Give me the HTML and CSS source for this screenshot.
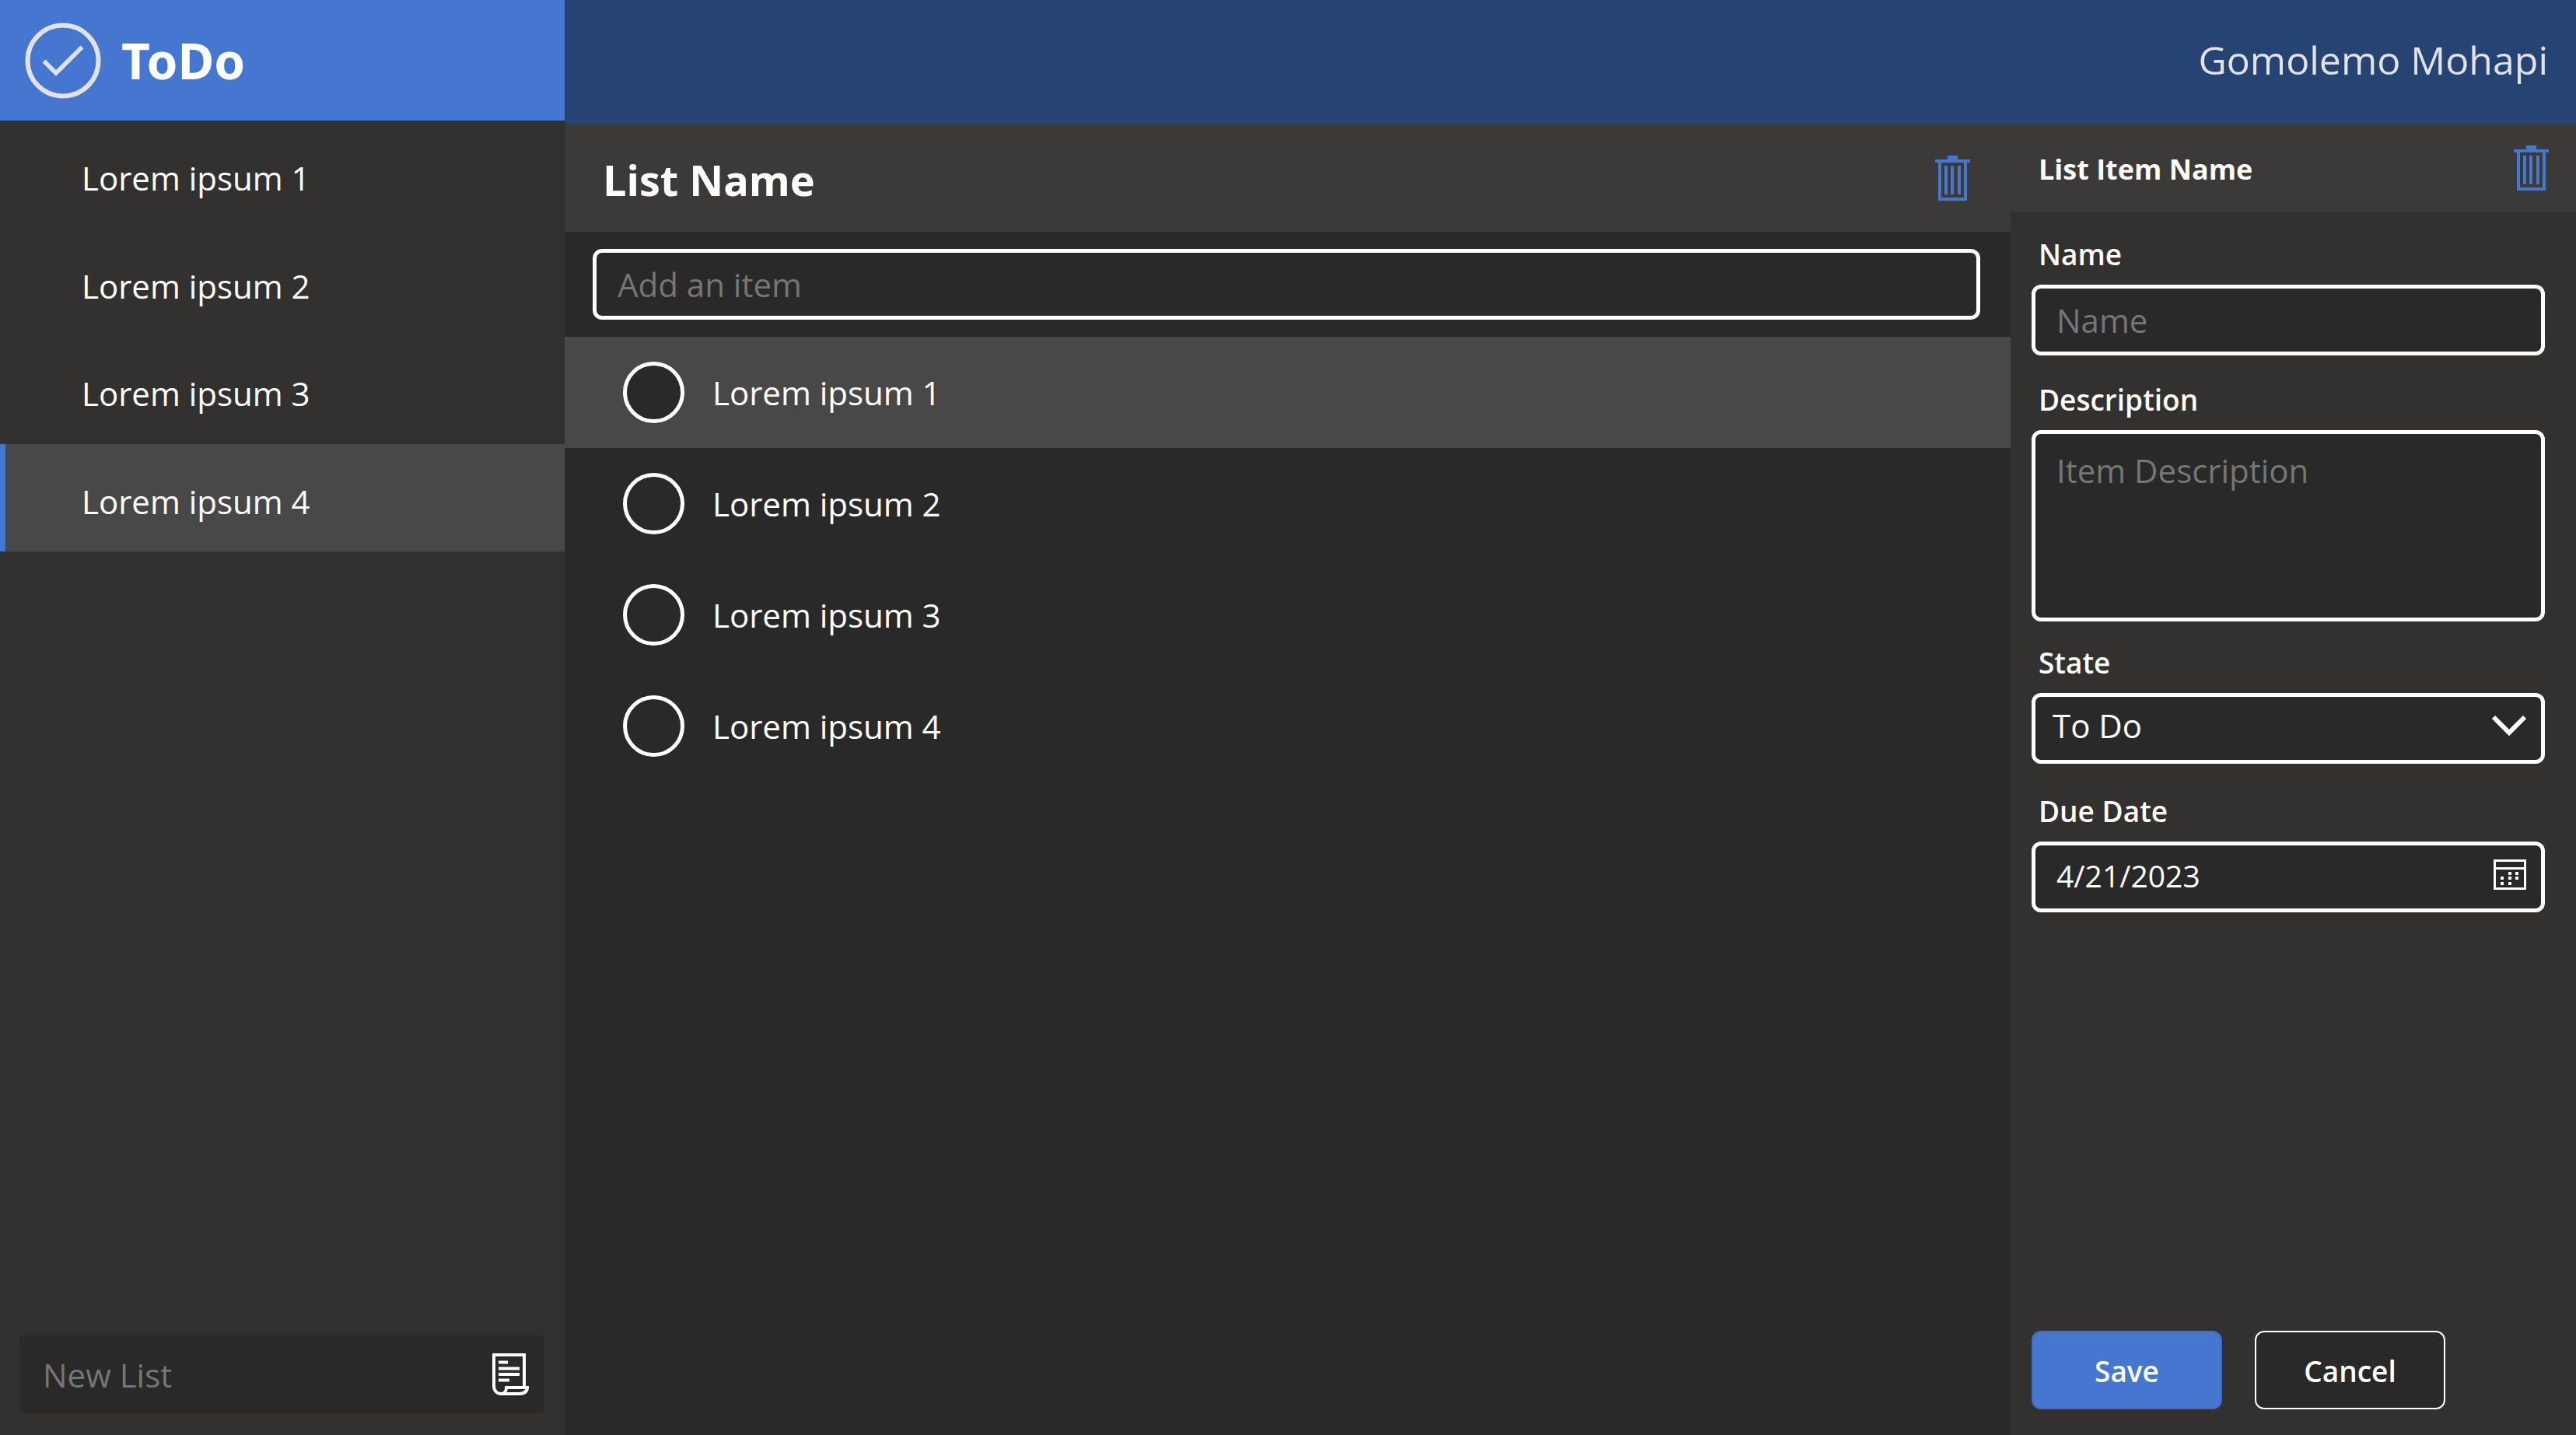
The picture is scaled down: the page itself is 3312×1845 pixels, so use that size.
FILE: index.html
```html
<!DOCTYPE html>
<html lang="en">
<head>
  <meta charset="utf-8">
  <meta name="viewport" content="width=device-width, initial-scale=1">
  <title>ToDo</title>
  <link rel="stylesheet" href="styles.css">
</head>
<body>
  <div class="app">
    <aside class="sidebar">
      <div class="brand">
        <svg class="brand-icon" viewBox="0 0 98 98" aria-hidden="true">
          <circle cx="49" cy="49" r="45.5" fill="none" stroke="currentColor" stroke-width="6"/>
          <path d="M24.500 49.500 40 65 73.500 31.500" fill="none" stroke="currentColor" stroke-width="5.500"/>
        </svg>
        <span class="brand-name">ToDo</span>
      </div>
      <nav class="lists">
        <a class="list-link" href="#list-1">Lorem ipsum 1</a>
        <a class="list-link" href="#list-2">Lorem ipsum 2</a>
        <a class="list-link" href="#list-3">Lorem ipsum 3</a>
        <a class="list-link is-active" href="#list-4" aria-current="page">Lorem ipsum 4</a>
      </nav>
      <form class="new-list">
        <input class="new-list-input" type="text" placeholder="New List" aria-label="New List">
        <button class="icon-button" type="button" aria-label="Create list">
          <svg class="icon-scroll" viewBox="0 0 47 54" fill="none" stroke="currentColor" stroke-width="4" aria-hidden="true">
            <path d="M41 43V2H2V42C2 48 6 52 11 52H34C40 52 44.500 50 45 44H18C18 49 15 52 11 52"/>
            <path d="M8 11.500H20M8 19.500H35M8 27H35M8 34.500H22"/>
          </svg>
        </button>
      </form>
    </aside>

    <header class="topbar">
      <span class="user-name">Gomolemo Mohapi</span>
    </header>

    <main class="items">
      <div class="items-header">
        <h1 class="items-title">List Name</h1>
        <button class="icon-button" type="button" aria-label="Delete list">
          <svg class="icon-trash" viewBox="0 0 45 58" aria-hidden="true">
            <path fill="currentColor" fill-rule="evenodd" d="M16 0H29V5H45V9H41V58H4V9H0V5H16ZM8 9V54H37V9ZM12 13H16V50H12ZM20 13H24V50H20ZM29 13H33V50H29Z"/>
          </svg>
        </button>
      </div>
      <div class="add-item">
        <input class="text-field" type="text" placeholder="Add an item" aria-label="Add an item">
      </div>
      <ul class="item-list">
        <li><label class="item is-active"><input class="item-check" type="checkbox">Lorem ipsum 1</label></li>
        <li><label class="item"><input class="item-check" type="checkbox">Lorem ipsum 2</label></li>
        <li><label class="item"><input class="item-check" type="checkbox">Lorem ipsum 3</label></li>
        <li><label class="item"><input class="item-check" type="checkbox">Lorem ipsum 4</label></li>
      </ul>
    </main>

    <section class="details">
      <div class="details-header">
        <h2 class="details-title">List Item Name</h2>
        <button class="icon-button" type="button" aria-label="Delete item">
          <svg class="icon-trash" viewBox="0 0 45 58" aria-hidden="true">
            <path fill="currentColor" fill-rule="evenodd" d="M16 0H29V5H45V9H41V58H4V9H0V5H16ZM8 9V54H37V9ZM12 13H16V50H12ZM20 13H24V50H20ZM29 13H33V50H29Z"/>
          </svg>
        </button>
      </div>
      <form class="details-form">
        <div class="field">
          <label class="field-label" for="item-name">Name</label>
          <input class="text-field" id="item-name" type="text" placeholder="Name">
        </div>
        <div class="field field-description">
          <label class="field-label" for="item-description">Description</label>
          <textarea class="text-field text-area" id="item-description" placeholder="Item Description"></textarea>
        </div>
        <div class="field">
          <label class="field-label" for="item-state">State</label>
          <div class="field-control">
            <select class="text-field select-field" id="item-state">
              <option>To Do</option>
              <option>In Progress</option>
              <option>Done</option>
            </select>
            <svg class="field-icon icon-chevron" viewBox="0 0 44 26" aria-hidden="true">
              <path d="M2 2 22 22 42 2" fill="none" stroke="currentColor" stroke-width="6"/>
            </svg>
          </div>
        </div>
        <div class="field field-date">
          <label class="field-label" for="item-due">Due Date</label>
          <div class="field-control">
            <input class="text-field date-field" id="item-due" type="text" value="4/21/2023">
            <svg class="field-icon icon-calendar" viewBox="0 0 42 39" aria-hidden="true">
              <path d="M1.500 1.500H40.500V37.500H1.500ZM1.500 11.500H40.500" fill="none" stroke="currentColor" stroke-width="3"/>
              <path d="M19 16h4v4h-4zM28 16h4v4h-4zM9 22h4v4h-4zM19 22h4v4h-4zM28 22h4v4h-4zM9 29h4v4h-4zM19 29h4v4h-4z" fill="currentColor"/>
            </svg>
          </div>
        </div>
        <div class="actions">
          <button class="button button-primary" type="button">Save</button>
          <button class="button" type="button">Cancel</button>
        </div>
      </form>
    </section>
  </div>
</body>
</html>
```
FILE: styles.css
```css
:root {
  --blue: #4577d0;
  --navy: #254474;
  --panel: #32312f;
  --panel-header: #3b3a38;
  --surface: #292929;
  --selected: #484848;
  --muted: #767676;
  --soft: #e2e2e2;
}

* {
  box-sizing: border-box;
}

body {
  margin: 0;
  background: var(--surface);
  color: #fff;
  font: 42px/56px "Open Sans", "Noto Sans", sans-serif;
}

button,
input,
select,
textarea {
  margin: 0;
  color: inherit;
  font: inherit;
}

h1,
h2,
ul {
  margin: 0;
  padding: 0;
}

.app {
  display: grid;
  grid-template: 160px 1fr / 726px minmax(0, 1fr) 727px;
  min-height: 100vh;
}

/* Sidebar */

.sidebar {
  grid-row: 1 / 3;
  display: flex;
  flex-direction: column;
  background: var(--panel);
}

.brand {
  display: flex;
  align-items: center;
  gap: 26px;
  height: 155px;
  padding-left: 32px;
  background: var(--blue);
}

.brand-icon {
  width: 98px;
  height: 98px;
  color: var(--soft);
}

.brand-name {
  font-family: "Noto Sans", "Open Sans", sans-serif;
  font-size: 64px;
  font-weight: 700;
  line-height: 80px;
}

.lists {
  display: grid;
  grid-auto-rows: 1fr;
  height: 554px;
}

.list-link {
  display: flex;
  align-items: center;
  padding: 10px 24px 0 98px;
  border-left: 7px solid transparent;
  color: inherit;
  text-decoration: none;
}

.list-link.is-active {
  border-left-color: var(--blue);
  background: var(--selected);
}

.new-list {
  display: flex;
  align-items: center;
  height: 100px;
  margin: auto 27px 28px 25px;
  padding: 0 19px 0 30px;
  background: var(--surface);
}

.new-list-input {
  flex: 1;
  min-width: 0;
  height: 100%;
  padding: 0;
  border: 0;
  outline: 0;
  background: none;
}

::placeholder {
  color: var(--muted);
  opacity: 1;
}

.icon-button {
  display: flex;
  padding: 0;
  border: 0;
  background: none;
  cursor: pointer;
}

.icon-scroll {
  width: 47px;
  height: 54px;
}

.icon-trash {
  width: 45px;
  height: 58px;
  color: var(--blue);
}

/* Top bar */

.topbar {
  grid-column: 2 / 4;
  display: flex;
  align-items: center;
  justify-content: flex-end;
  padding: 0 36px 6px 0;
  background: var(--navy);
}

.user-name {
  color: var(--soft);
  font-size: 50px;
  line-height: 64px;
}

/* List items */

.items-header,
.details-header {
  display: flex;
  align-items: center;
  justify-content: space-between;
  background: var(--panel-header);
}

.items-header {
  height: 138px;
  padding: 0 52px 0 49px;
}

.items-title {
  padding-top: 3px;
  font-size: 54px;
  line-height: 72px;
}

.add-item {
  padding: 22px 39px 22px 36px;
}

.text-field {
  display: block;
  width: 100%;
  height: 91px;
  padding: 0 27px;
  border: 5px solid #fff;
  border-radius: 12px;
  background: var(--surface);
}

.item-list {
  list-style: none;
}

.item {
  display: flex;
  align-items: center;
  gap: 36px;
  height: 143px;
  padding-left: 75px;
}

.item.is-active {
  background: var(--selected);
}

.item-check {
  width: 79px;
  height: 79px;
  border: 5px solid #fff;
  border-radius: 50%;
  background: var(--surface);
  appearance: none;
}

.item-check:checked {
  background: var(--blue);
}

/* Item details */

.details {
  display: flex;
  flex-direction: column;
  background: var(--panel);
}

.details-header {
  height: 112px;
  padding: 0 35px 0 36px;
}

.details-title {
  padding-top: 3px;
  font-size: 36px;
  line-height: 48px;
}

.details-form {
  flex: 1;
  display: flex;
  flex-direction: column;
  gap: 28px;
  padding: 30px 40px 33px 27px;
}

.field {
  display: flex;
  flex-direction: column;
  gap: 14px;
}

.field-description {
  margin-top: 4px;
}

.field-date {
  margin-top: 8px;
}

.field-label {
  padding-left: 9px;
  font-size: 37px;
  font-weight: 600;
  line-height: 50px;
}

.text-area {
  height: 246px;
  padding-top: 19px;
  resize: none;
}

.field-control {
  position: relative;
}

.select-field {
  padding: 0 72px 8px 22px;
  appearance: none;
}

.date-field {
  padding-right: 72px;
  padding-bottom: 4px;
  font-size: 39px;
}

.field-icon {
  position: absolute;
  right: 24px;
  pointer-events: none;
}

.icon-chevron {
  top: 29px;
  width: 44px;
  height: 26px;
  overflow: visible;
}

.icon-calendar {
  top: 23px;
  width: 42px;
  height: 39px;
}

.actions {
  display: flex;
  gap: 42px;
  margin-top: auto;
}

.button {
  width: 245px;
  height: 101px;
  padding: 2px 0 0;
  border: 2px solid #fff;
  border-radius: 12px;
  background: var(--surface);
  font-size: 37px;
  font-weight: 600;
}

.button-primary {
  border-color: #3f6dbf;
  background: var(--blue);
}
```
